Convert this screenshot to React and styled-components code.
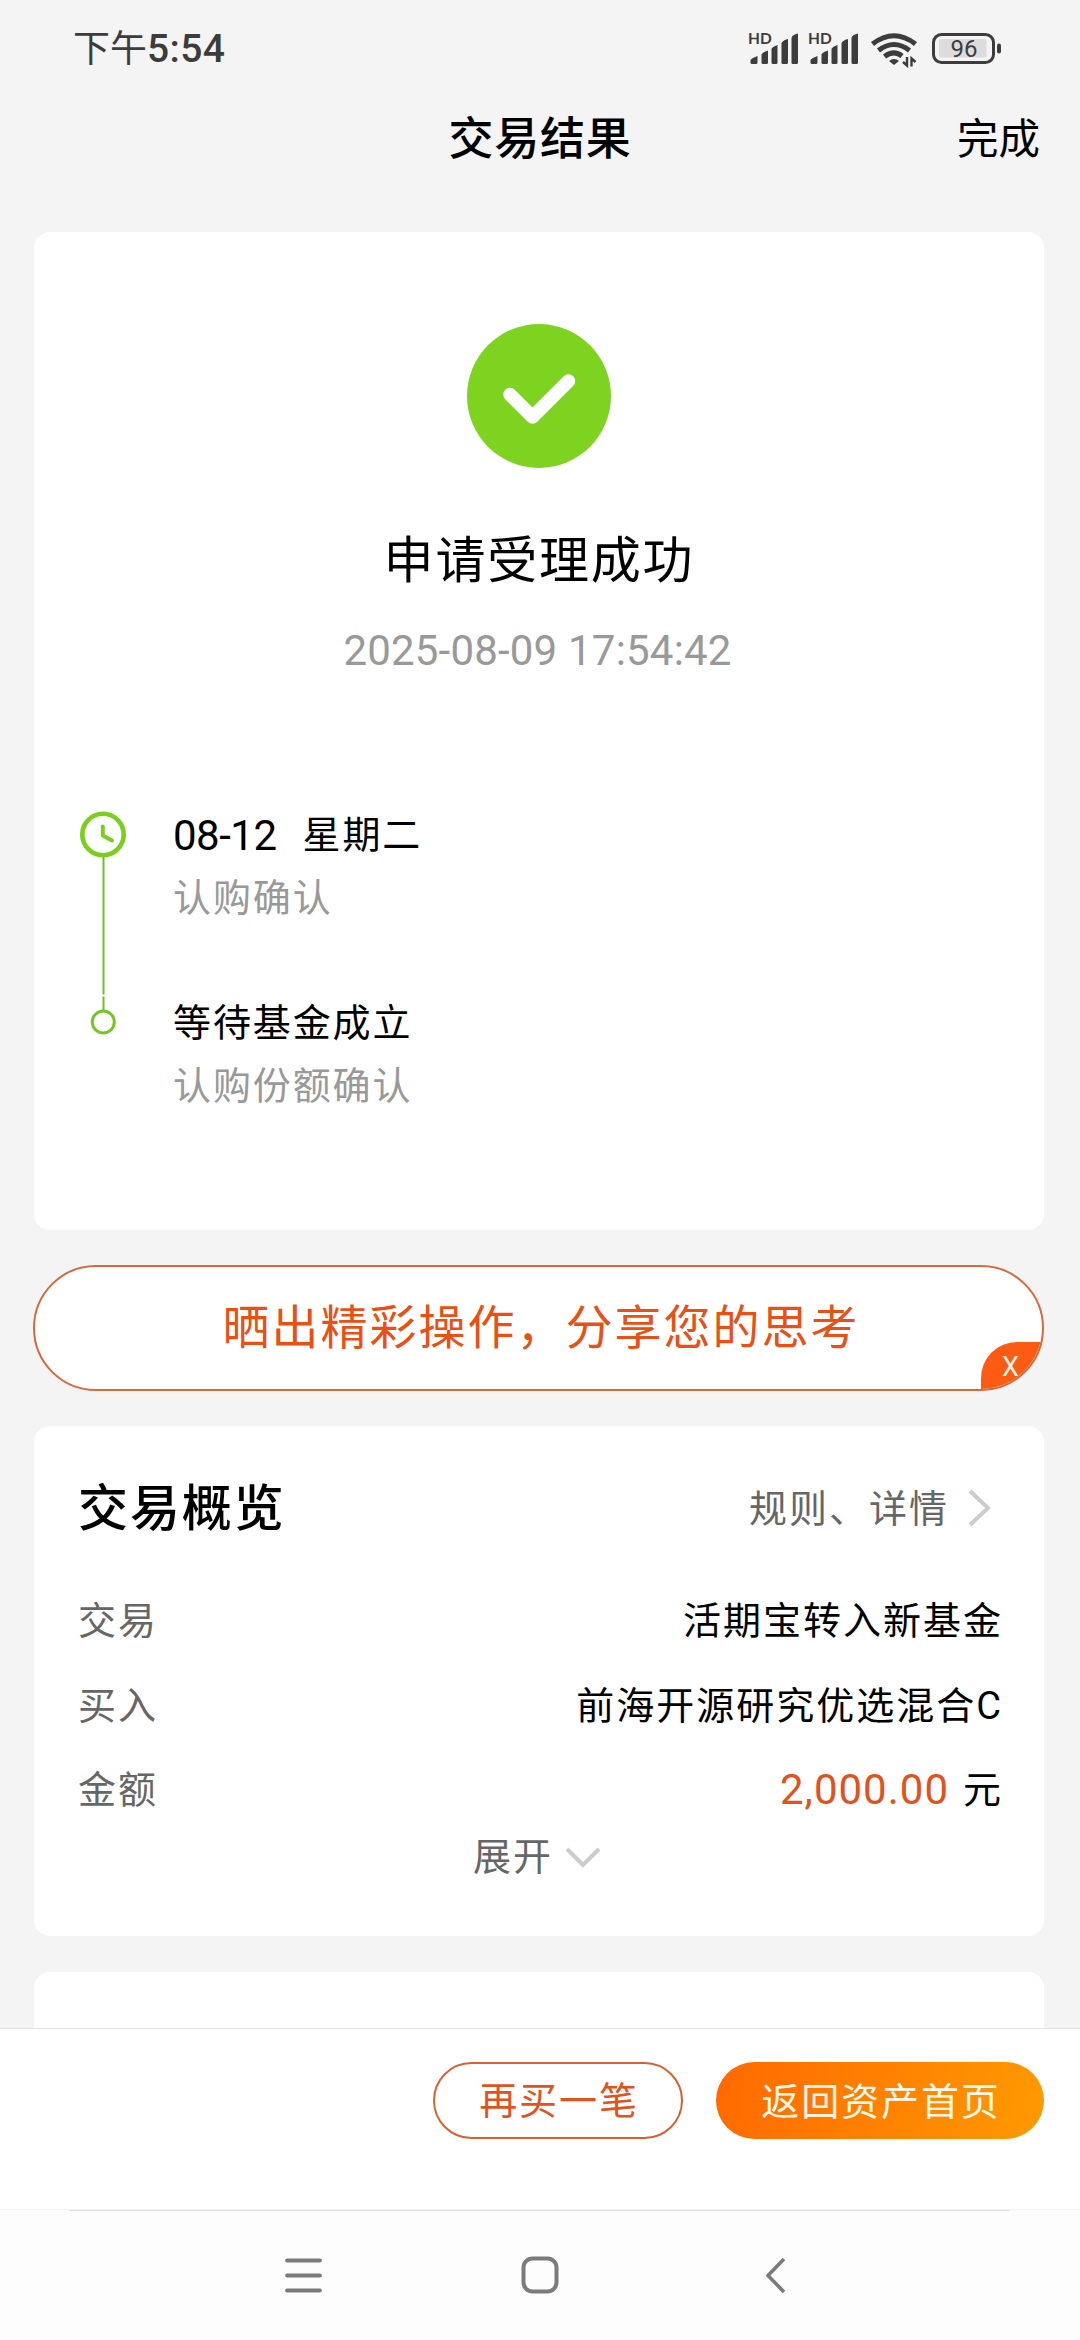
import React from 'react';
import styled, { createGlobalStyle } from 'styled-components';

const GlobalStyle = createGlobalStyle`
* {
    box-sizing: border-box;
}
body {
    margin: 0;
    background: #f4f4f4;
    font-family: Roboto, "Noto Sans CJK SC", sans-serif;
    color: #000;
}
`

const rows = [
    { label: '交易', value: '活期宝转入新基金' },
    { label: '买入', value: '前海开源研究优选混合C' },
    { label: '金额', amount: '2,000.00', value: '元' },
];

function Signal() {
    return (
        <svg width="52" height="40" viewBox="0 -6 52 40" fill="#3c3c3c">
            <text x="0" y="12" fontSize="15.500" fontWeight="700" fontFamily="Lato, sans-serif">HD</text>
            <path d="M2.500 28Q3 26.500 9.500 24V30.500Q9.500 32 8 32H4Q2.500 32 2.500 30.500Z" />
            <path d="M13.500 22.500Q14 20.500 20 18.500V30.500Q20 32 18.500 32H15Q13.500 32 13.500 30.500Z" />
            <path d="M23.500 17Q24 15 29.500 13V30.500Q29.500 32 28 32H25Q23.500 32 23.500 30.500Z" />
            <path d="M33.500 11.500Q34 8.500 40 7V30.500Q40 32 38.500 32H35Q33.500 32 33.500 30.500Z" />
            <path d="M43.500 6Q44 2.500 50 1.500V30.500Q50 32 48.500 32H45Q43.500 32 43.500 30.500Z" />
        </svg>
    );
}

function Wifi() {
    return (
        <svg width="48" height="36" viewBox="0 0 48 36" fill="none" stroke="#3c3c3c" strokeWidth="5">
            <path d="M2.500 12Q24 -4.500 45.500 12" />
            <path d="M8.500 18.500Q24 6.500 39.500 18.500" />
            <path d="M14.500 24.500Q24 17.500 32 24" />
            <path d="M19 29Q24 25 29 29L24 33Z" fill="#3c3c3c" stroke="none" />
            <path d="M37 25V33.500L33 30M41.500 34.500V26.500L45.500 30" strokeWidth="2.400" />
        </svg>
    );
}

function Battery() {
    return (
        <svg width="70" height="32" viewBox="0 0 70 32">
            <rect x="1.500" y="1.500" width="60" height="28" rx="8" fill="none" stroke="#3c3c3c" strokeWidth="3" />
            <rect x="7" y="6" width="47.500" height="18.500" rx="2" fill="#dcdcdc" />
            <rect x="65" y="10.500" width="4" height="10" rx="2" fill="#3c3c3c" />
            <text x="18.500" y="24.300" fontSize="24" fontWeight="400" fontFamily="Roboto, sans-serif" fill="#3c3c3c">96</text>
        </svg>
    );
}

// green rail that joins the two steps
function Rail() {
    return (
        <svg width="48" height="226" viewBox="0 0 48 226" fill="none">
            <path d="M24.500 46V183.500M24.500 185.500V199" stroke="#6fc02b" strokeWidth="2" />
            <circle cx="24" cy="23.500" r="20.700" stroke="#79cf1c" strokeWidth="4.600" />
            <path d="M23.800 15.500V24.500L33 29.500" stroke="#79cf1c" strokeWidth="4" strokeLinecap="round" strokeLinejoin="round" />
            <circle cx="24.300" cy="211" r="11" stroke="#74c622" strokeWidth="3" />
        </svg>
    );
}

function App() {
    return (
        <Screen lang="zh-CN">
            <GlobalStyle />
            <StatusBar>
                <Clock>下午<Digits>5:54</Digits></Clock>
                <StatusIcons>
                    <Signal />
                    <Signal />
                    <Wifi />
                    <Battery />
                </StatusIcons>
            </StatusBar>
            <Header>
                <HeaderTitle>交易结果</HeaderTitle>
                <Done>完成</Done>
            </Header>

            <Content>
                <ResultCard>
                    <svg width="144" height="144" viewBox="0 0 144 144">
                        <circle cx="72" cy="72" r="72" fill="#7ed321" />
                        <path d="M43 70.500L65.500 93L101.500 57" fill="none" stroke="#fff" strokeWidth="13.500" strokeLinecap="round" strokeLinejoin="round" />
                    </svg>
                    <ResultTitle>申请受理成功</ResultTitle>
                    <ResultTime>2025-08-09 17:54:42</ResultTime>
                    <Steps>
                        <Rail />
                        <StepList>
                            <Step>
                                <StepTitle><StepDate>08-12</StepDate>星期二</StepTitle>
                                <StepNote>认购确认</StepNote>
                            </Step>
                            <Step>
                                <StepTitle>等待基金成立</StepTitle>
                                <StepNote>认购份额确认</StepNote>
                            </Step>
                        </StepList>
                    </Steps>
                </ResultCard>

                <ShareButton>
                    晒出精彩操作，分享您的思考
                    <ShareClose>X</ShareClose>
                </ShareButton>

                <OverviewCard>
                    <OverviewHead>
                        <OverviewTitle>交易概览</OverviewTitle>
                        <RuleLink>
                            规则、详情
                            <svg width="26" height="40" viewBox="0 0 26 40" fill="none" stroke="#ccc" strokeWidth="4">
                                <path d="M2 3L20 20L2 37" />
                            </svg>
                        </RuleLink>
                    </OverviewHead>
                    {rows.map((row) => (
                        <Row key={row.label}>
                            <Label>{row.label}</Label>
                            <Value>
                                {row.amount && <Amount>{row.amount}</Amount>}
                                {row.value}
                            </Value>
                        </Row>
                    ))}
                    <Expand>
                        展开
                        <svg width="36" height="24" viewBox="0 0 36 24" fill="none" stroke="#ccc" strokeWidth="4">
                            <path d="M2 3L18 19L34 3" />
                        </svg>
                    </Expand>
                </OverviewCard>
                <NextCard />
            </Content>

            <ActionBar>
                <ActionButton $width={250}>再买一笔</ActionButton>
                <ActionButton $width={328} $primary>返回资产首页</ActionButton>
            </ActionBar>

            <NavBar>
                <NavLine />
                <NavIcons>
                    <svg width="40" height="40" viewBox="0 0 40 40" stroke="#7b7b7b" strokeWidth="3.800" strokeLinecap="round">
                        <path d="M3 5.500H36M3 20.500H36M3 35.500H36" />
                    </svg>
                    <svg width="40" height="40" viewBox="0 0 40 40" fill="none" stroke="#7b7b7b" strokeWidth="4">
                        <rect x="3.500" y="3.500" width="33" height="33" rx="9" />
                    </svg>
                    <svg width="40" height="40" viewBox="0 0 40 40" fill="none" stroke="#7b7b7b" strokeWidth="3.600" strokeLinejoin="round">
                        <path d="M28 4L12 20.500L28 37" />
                    </svg>
                </NavIcons>
            </NavBar>
        </Screen>
    );
}

const Screen = styled.div`
width: 1080px;
height: 2340px;
display: flex;
flex-direction: column;
overflow: hidden;
background: #f4f4f4;
`

const StatusBar = styled.div`
height: 96px;
display: flex;
justify-content: space-between;
padding: 0 78px 0 73px;
`

const Clock = styled.div`
font-size: 37px;
line-height: 98px;
color: #3c3c3c;
`

const Digits = styled.span`
font-size: 39px;
font-weight: 500;
letter-spacing: 0.4px;
`

const StatusIcons = styled.div`
display: flex;
align-items: flex-start;
padding-top: 26px;
svg:nth-child(2) {
    margin-left: 8px;
}
svg:nth-child(3) {
    margin: 6px 0 0 10px;
}
svg:nth-child(4) {
    margin: 7px 0 0 14px;
}
`

const Header = styled.div`
height: 136px;
display: grid;
grid-template-columns: 1fr auto 1fr;
padding: 0 40px 0 40px;
line-height: 87px;
`

const HeaderTitle = styled.div`
grid-column: 2;
font-size: 45px;
font-weight: 500;
letter-spacing: 0.8px;
`

const Done = styled.div`
justify-self: end;
font-size: 41.5px;
`

const Content = styled.div`
height: 1796px;
padding: 0 36px 0 34px;
overflow: hidden;
`

const Card = styled.div`
background: #fff;
border-radius: 16px;
`

const ResultCard = styled(Card)`
height: 998px;
padding-top: 92px;
display: flex;
flex-direction: column;
align-items: center;
`

const ResultTitle = styled.div`
margin-top: 63px;
font-size: 50px;
line-height: 60px;
letter-spacing: 1.8px;
`

const ResultTime = styled.div`
margin: 30px 3px 0 0;
font-size: 42px;
line-height: 60px;
letter-spacing: 0.2px;
color: #999;
`

const Steps = styled.div`
align-self: stretch;
display: flex;
margin-top: 130px;
padding-left: 45px;
`

const StepList = styled.div`
padding-left: 46px;
`

const Step = styled.div`
height: 188px;
font-size: 38px;
line-height: 63px;
letter-spacing: 1.9px;
margin-top: -7px;
&:last-child {
    margin-top: 0;
}
`

const StepTitle = styled.div`
display: flex;
`

const StepDate = styled.span`
font-size: 42px;
letter-spacing: -0.5px;
margin-right: 26px;
`

const StepNote = styled.div`
color: #999;
`

const ShareButton = styled.div`
position: relative;
height: 126px;
margin: 35px 0 35px -1px;
padding-left: 5px;
border: 2px solid #d9683a;
border-radius: 64px;
overflow: hidden;
background: #fff;
color: #ea4f13;
font-size: 47px;
letter-spacing: 2px;
line-height: 122px;
text-align: center;
`

const ShareClose = styled.div`
position: absolute;
right: 0;
bottom: 0;
width: 61px;
height: 47px;
padding-left: 21px;
border-top-left-radius: 36px;
background: #fc5b13;
color: #fff3e6;
font-size: 27px;
letter-spacing: 0;
line-height: 50px;
text-align: left;
`

const OverviewCard = styled(Card)`
height: 510px;
padding: 40px 41px 0 44px;
`

const OverviewHead = styled.div`
height: 113px;
display: flex;
justify-content: space-between;
line-height: 87px;
`

const OverviewTitle = styled.div`
font-size: 50px;
font-weight: 500;
letter-spacing: 1.9px;
`

const RuleLink = styled.div`
display: flex;
align-items: flex-start;
color: #666;
font-size: 38px;
letter-spacing: 2px;
svg {
    margin: 22px 9px 0 19px;
}
`

const Row = styled.div`
height: 84.500px;
display: flex;
justify-content: space-between;
font-size: 38px;
letter-spacing: 2px;
line-height: 84px;
`

const Label = styled.div`
color: #666;
`

const Value = styled.div`
display: flex;
`

const Amount = styled.span`
margin-right: 14px;
font-size: 42px;
letter-spacing: 1px;
color: #e2521c;
`

const Expand = styled.div`
display: flex;
padding-left: 395px;
margin-top: -9px;
font-size: 38px;
letter-spacing: 2px;
line-height: 66px;
color: #666;
svg {
    margin: 22px 0 0 12px;
}
`

const NextCard = styled(Card)`
height: 200px;
margin-top: 36px;
`

const ActionBar = styled.div`
height: 181px;
display: flex;
justify-content: flex-end;
gap: 33px;
padding: 33px 36px 0 0;
border-top: 1px solid #e4e4e4;
background: #fff;
`

const ActionButton = styled.div`
width: ${props => props.$width}px;
height: 77px;
padding-left: 2px;
border: ${props => props.$primary ? '0' : '2px solid #d9602f'};
border-radius: 39px;
background: ${props => props.$primary ? 'linear-gradient(100deg, #ff6900, #ff9a00)' : '#fff'};
color: ${props => props.$primary ? '#fff8ea' : '#e2521c'};
font-size: 38px;
letter-spacing: 1.9px;
line-height: ${props => props.$primary ? '80px' : '74px'};
text-align: center;
`

const NavBar = styled.div`
height: 131px;
border-top: 1px solid #f3f3f3;
background: #fdfdfd;
`

const NavLine = styled.div`
height: 1px;
margin: 0 70px 0 69px;
background: #dedede;
`

const NavIcons = styled.div`
display: flex;
gap: 196px;
padding: 44px 0 0 284px;
`

export default App;
